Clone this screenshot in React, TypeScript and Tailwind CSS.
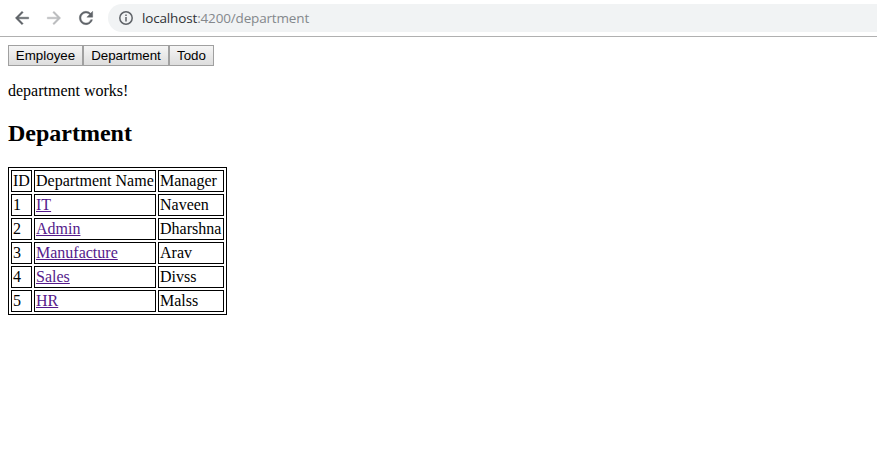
const departments = [
  { id: 1, name: "IT", manager: "Naveen" },
  { id: 2, name: "Admin", manager: "Dharshna" },
  { id: 3, name: "Manufacture", manager: "Arav" },
  { id: 4, name: "Sales", manager: "Divss" },
  { id: 5, name: "HR", manager: "Malss" },
];

const iconPaths = {
  back: "M20 11H7.83l5.59-5.59L12 4l-8 8 8 8 1.41-1.41L7.83 13H20v-2z",
  forward: "M12 4l-1.41 1.41L16.17 11H4v2h12.17l-5.58 5.59L12 20l8-8z",
  reload:
    "M17.65 6.35A7.958 7.958 0 0 0 12 4c-4.42 0-7.99 3.58-7.99 8s3.57 8 7.99 8c3.73 0 6.84-2.55 7.73-6h-2.08A5.99 5.99 0 0 1 12 18c-3.31 0-6-2.69-6-6s2.69-6 6-6c1.66 0 3.14.69 4.22 1.78L13 11h7V4l-2.35 2.35z",
};

function NavIcon({ path, className }: { path: string; className: string }) {
  return (
    <svg viewBox="0 0 24 24" className={`h-5 w-5 shrink-0 ${className}`} fill="currentColor" stroke="currentColor" strokeWidth="0.5">
      <path d={path} />
    </svg>
  );
}

function Toolbar() {
  return (
    <header className="flex h-[37px] items-center border-b border-[#b0b0b0] bg-white pl-3">
      <NavIcon path={iconPaths.back} className="text-[#5f6368]" />
      <NavIcon path={iconPaths.forward} className="ml-3 text-[#babcbe]" />
      <NavIcon path={iconPaths.reload} className="ml-3 text-[#5f6368]" />
      <div className="ml-3 flex h-7 flex-1 items-center rounded-l-full bg-[#f1f3f4] pl-[11px]">
        <svg viewBox="0 0 14 14" className="h-3.5 w-3.5 shrink-0" fill="none" stroke="#5f6368" strokeWidth="1.5">
          <circle cx="7" cy="7" r="6.2" />
          <path d="M7 3.4v1.5M7 6v4.5" />
        </svg>
        <span className="ml-[9px] font-['Open_Sans',sans-serif] text-[13.5px] leading-5 tracking-[-0.16px] whitespace-nowrap text-[#84888c]">
          <span className="text-[#303236]">localhost</span>:4200/department
        </span>
      </div>
    </header>
  );
}

function NavButton({ label, className }: { label: string; className: string }) {
  return (
    <button
      className={`h-[21px] border border-[#a0a0a0] bg-linear-to-b from-[#f5f5f5] to-[#dddddd] text-center font-['Liberation_Sans',Arial,sans-serif] text-[13.333px] leading-[19px] whitespace-nowrap text-black ${className}`}
    >
      {label}
    </button>
  );
}

const cell = "h-[22px] border border-black p-px leading-[18px] font-normal text-left whitespace-nowrap";

export default function App() {
  return (
    <div className="h-[454px] overflow-hidden bg-white font-['Liberation_Serif','Times_New_Roman',serif] text-base text-black">
      <Toolbar />
      <main className="px-2 pt-2">
        <nav className="flex">
          <NavButton label="Employee" className="w-[75px]" />
          <NavButton label="Department" className="w-[86px]" />
          <NavButton label="Todo" className="w-[45px]" />
        </nav>
        <p className="mt-4 leading-[18px]">department works!</p>
        <h2 className="mt-5 text-2xl leading-[27px] font-bold">Department</h2>
        <table className="mt-5 w-[219px] table-fixed border-separate border-spacing-[2px] border border-black">
          <colgroup>
            <col className="w-[21px]" />
            <col className="w-[122px]" />
            <col className="w-[66px]" />
          </colgroup>
          <tbody>
            <tr>
              <th className={cell}>ID</th>
              <th className={cell}>Department Name</th>
              <th className={cell}>Manager</th>
            </tr>
            {departments.map((d) => (
              <tr key={d.id}>
                <td className={cell}>{d.id}</td>
                <td className={cell}>
                  <a href="#" className="text-[#551a8b] underline">{d.name}</a>
                </td>
                <td className={cell}>{d.manager}</td>
              </tr>
            ))}
          </tbody>
        </table>
      </main>
    </div>
  );
}
